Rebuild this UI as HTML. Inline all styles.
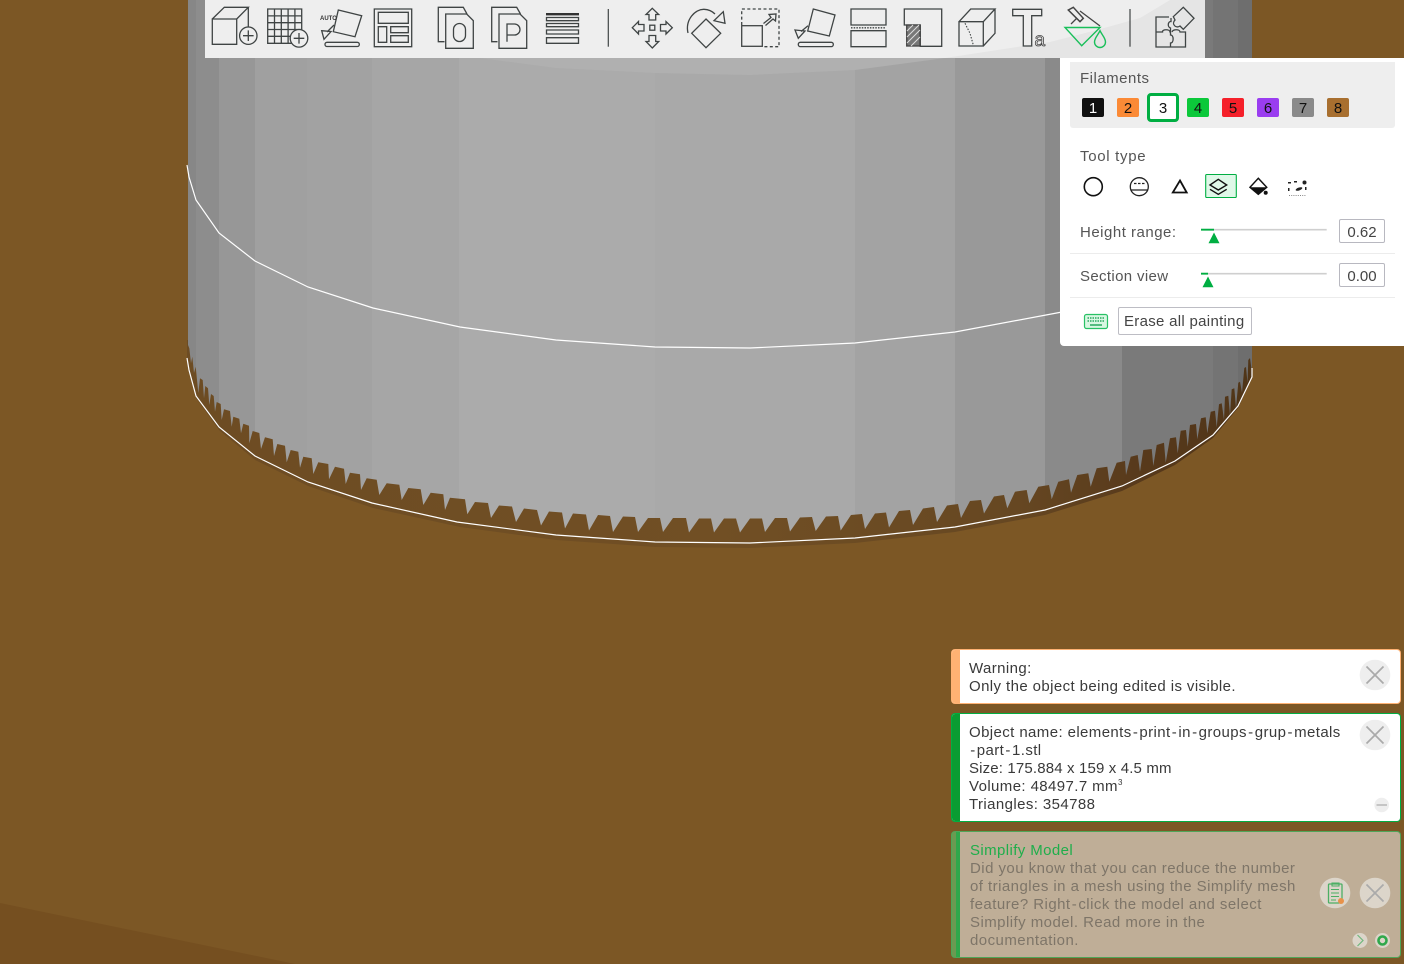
<!DOCTYPE html>
<html lang="en"><head><meta charset="utf-8"><title>Paint</title>
<style>
html,body{margin:0;padding:0}
body{width:1404px;height:964px;overflow:hidden;background:#7c5725;position:relative;font-family:"Liberation Sans",sans-serif;font-size:15px;color:#555}
svg{position:absolute;left:0;top:0}
.t{position:absolute;white-space:nowrap;line-height:18px;letter-spacing:.4px}
.h{padding:0 1.2px}
.sw{position:absolute;top:98px;width:22px;height:19px;border-radius:2px;text-align:center;line-height:22px;color:#111;font-size:15px}
.inp{position:absolute;left:1339px;width:44px;height:22px;border:1px solid #b8b8c0;border-radius:2px;text-align:center;line-height:25px;background:#fff;color:#444;font-size:15px}
.n{position:absolute;left:951px;width:448px;border:1px solid #00ae42;border-radius:4px;background:#fff;color:#3a3a3a;overflow:hidden;box-sizing:content-box}
.bar{position:absolute;left:0;top:0;bottom:0;width:8px}
</style></head><body>
<svg width="1404" height="964" viewBox="0 0 1404 964">
<defs>
<linearGradient id="dk" gradientUnits="userSpaceOnUse" x1="188" y1="0" x2="1252" y2="0">
<stop offset="0" stop-color="#6d4c23"/><stop offset=".5" stop-color="#714f24"/><stop offset=".78" stop-color="#664722"/><stop offset=".9" stop-color="#57391b"/><stop offset="1" stop-color="#503518"/>
</linearGradient>
<clipPath id="cyl"><path d="M188,0V345L189.3,348.3 191,363.3 192.3,356.7 194,373 195.7,366.7 198.3,393 200,378.3 202.7,380 204,398.3 205.3,386 208,388.3 209.3,405 211,394 213.7,396 215,411.7 216.7,402 220.7,404 221.7,420 224,409.3 230,411 231.7,426.7 233.3,416.7 239.3,418.7 241,433.3 243.3,423.7 249,425.7 249.3,443.3 252.7,431 259.3,433 261,449 265,437.3 272.7,439.3 274,456 277.3,444 285,445.7 286.7,462.3 290.7,450 298.3,451.7 300,467.7 303.3,456.7 311.7,458.3 313.3,474 318.3,462.3 328.3,464 329,479.3 335,466.7 344,468.7 345.7,484 350,472.7 360,474.3 361,490 366.7,478.3 376.7,479.7 379.3,495 386.7,483.3 399.3,484.7 401.7,500 408.3,488 420.7,489.3 423.3,505 430.7,492.7 443.3,494.3 445,510 450,497.7 465,499.3 467.3,514.3 475,502 488,503 491,518 499,505.5 512,506.5 516,522 524,508.5 537,510 541,525.5 549,511.5 562,512.5 565,528.5 573,513.5 586,514.5 589,530.5 598,515 610,516 613,532 623,516.5 635,517 638,532 648,518 660,518 663,532 673,518 686,518 689,532.5 699,518.5 711,518.5 714,532.5 724,518.5 736,518.5 740,532.5 750,518.5 762,518.5 765,532 775,518 787,518 790,531.5 800,517.5 812,517 815.7,531 826,516.5 838,516 840.7,530.5 851,515 862,514 865,529 875,513.5 886,512.5 889,527.5 899,511 910,510 913,525 923,508.5 934,507 937,522 947,505.5 958,504 961,518 970,501 981,500 984,513.5 994,496.5 1004,495 1007.3,508.3 1015,491.7 1026.7,490 1029.3,503.3 1038.3,486.7 1049,485 1051.7,499.3 1058.3,481.7 1069,479.3 1071,492.7 1077.3,475 1088.3,473.3 1090.7,486.7 1096.7,468.3 1107.3,466.7 1109.3,481.7 1116.7,462.7 1125,461 1126,475 1130.7,456.7 1137.7,455 1140,471.7 1143.3,450 1151.7,449 1153.3,466 1156.7,445 1164,442.7 1165.7,462.7 1170,438.3 1176,437.3 1177.7,453.3 1180.7,430.7 1186,430 1187.7,446.7 1190,425 1196,424 1197.3,439.3 1201,418.3 1205.7,417.3 1207.3,433.3 1210.7,411.7 1215,410.7 1216.7,427.3 1219,404.3 1221.7,403.3 1224,420 1225,396.7 1228.3,395.7 1230,415 1231.7,389.3 1234.3,388.3 1236,408 1238.3,382.7 1240,381.7 1242,393 1244.3,368 1246,367 1247.5,383 1248.3,360 1250,358 1252,373V0Z"/></clipPath>
</defs>
<polygon points="0,903 295,964 0,964" fill="#754f20"/>
<polygon fill="url(#dk)" points="187,340 187,360 189,372 196,398 219,430 255,460 308,486 373,508 460,527 556,540 655,547 750,548 855,543 955,532 1045,515 1122,491 1175,465 1213,438 1238,408 1252,378 1252,340"/>
<g clip-path="url(#cyl)">
<rect x="188" y="0" width="8" height="560" fill="#878787"/>
<rect x="196" y="0" width="23" height="560" fill="#8d8d8d"/>
<rect x="219" y="0" width="36" height="560" fill="#979797"/>
<rect x="255" y="0" width="52" height="560" fill="#a0a0a0"/>
<rect x="307" y="0" width="65" height="560" fill="#a2a2a2"/>
<rect x="372" y="0" width="87" height="560" fill="#a6a6a6"/>
<rect x="459" y="0" width="196" height="560" fill="#ababab"/>
<rect x="655" y="0" width="200" height="560" fill="#a9a9a9"/>
<rect x="855" y="0" width="100" height="560" fill="#a3a3a3"/>
<rect x="955" y="0" width="90" height="560" fill="#999999"/>
<rect x="1045" y="0" width="77" height="560" fill="#8a8a8a"/>
<rect x="1122" y="0" width="91" height="560" fill="#7a7a7a"/>
<rect x="1213" y="0" width="25" height="560" fill="#747474"/>
<rect x="1238" y="0" width="14" height="560" fill="#6e6e6e"/>
</g>
<polygon points="480,58 556,68 655,73 750,75 855,70 945,58" fill="#b0b0b0"/>
<polyline fill="none" stroke="#fff" stroke-width="1.2" points="187,165 189,177 196,200 219,233 255,261 308,287 373,308 460,327 556,340 655,347 750,348 855,343 955,332 1062,312"/>
<polyline fill="none" stroke="#fff" stroke-width="1.2" points="187,358 189,370 196,396 219,427 255,456 308,482 372,503 457,522 556,535 655,542 750,543 855,538 955,527 1045,510 1122,486 1175,461 1213,435 1238,406 1252,377 1252,368"/>
<!-- toolbar -->
<rect x="205" y="0" width="1000" height="58" fill="#eeeeee"/>
<polygon points="945,58 1050,42 1097,30 1140,18 1170,0 1205,0 1205,58" fill="#e5e5e5"/>
<g fill="none" stroke="#3f4444" stroke-width="1.3">
<!-- cube plus -->
<path d="M212.3,19H236.7V44.3H212.3ZM212.3,19L224.3,7.3H248.3L236.7,19M248.3,7.3V28"/>
<circle cx="248.3" cy="35.7" r="8.7" fill="#eee"/><path d="M243,35.7H253.6M248.3,30.4V41"/>
<!-- grid plus -->
<path d="M267.7,9H301.7V43.3H267.7ZM274.5,9V43.3M281.3,9V43.3M288.1,9V43.3M294.9,9V43.3M267.7,15.9H301.7M267.7,22.7H301.7M267.7,29.5H301.7M267.7,36.3H301.7"/>
<circle cx="299" cy="38.3" r="8.8" fill="#eee"/><path d="M293.7,38.3H304.3M299,33V43.6"/>
<!-- auto orient -->
<path d="M338.3,10L361.7,15.7 355,36.7 333.3,31.7Z"/>
<rect x="325" y="42.3" width="34.3" height="4.2" rx="2"/>
<path d="M321.7,30.7L331,31.5 324,39.3ZM334,25L327,32"/>
<!-- arrange -->
<path d="M374.3,9H411.7V46.7H374.3ZM378.3,12.3H408.3V23.3H378.3ZM378.3,26.7H386.7V42.3H378.3ZM390.7,26.7H408.3V32.7H390.7ZM390.7,35.7H408.3V42.3H390.7Z"/>
<!-- O -->
<path d="M444.5,41.7H438.3V7.3H463.3L467,14"/><path d="M445.7,14H466.7L473.3,20.7V48.3H445.7Z"/>
<rect x="453.5" y="23.5" width="12" height="18" rx="6"/>
<!-- P -->
<path d="M497.5,41.7H491.7V7.3H516.7L520.5,14"/><path d="M499,14H520L526.7,20.7V48.3H499Z"/>
<path d="M507,41.7V24H514.5a5.5,5.5 0 0 1 0,11H507"/>
<!-- layers -->
<rect x="546" y="13" width="33" height="2.4" fill="#333" stroke="none"/>
<path d="M546.5,17.5H578.5V20.7H546.5ZM546.5,23.5H578.5V26.7H546.5ZM546.5,30H578.5V34H546.5ZM546.5,37.7H578.5V43.3H546.5Z"/>
<path d="M608.3,9V46.7" stroke-width="1.2"/>
<!-- move -->
<path d="M652.3,8.3L658.7,14.5H655.7V20H649V14.5H646ZM652.3,48L658.7,41.5H655.7V35.5H649V41.5H646ZM632.3,27.7L638.5,21.5V24.5H644V31H638.5V34ZM672.3,27.7L666,21.5V24.5H660.5V31H666V34Z"/>
<rect x="649.8" y="25.2" width="5" height="5"/>
<!-- rotate -->
<path d="M706,19L720.7,33.3 706,47.7 691.7,33.3Z"/>
<path d="M688,33C685,20 695,9 704,9.3C708,9.5 712,11 715,14"/>
<path d="M723.3,11.7L725,23.3 714,20.7Z"/>
<!-- scale -->
<path d="M741.7,25V9H779V46.7H762.3" stroke-dasharray="3 2.4"/>
<rect x="741.7" y="25.7" width="20.6" height="20.6"/>
<path d="M763.5,23.5L771,17.5 769,14.5 776,14 775.5,21 773,19 765.5,25.5"/>
<!-- flatten -->
<path d="M813.3,9L835,15 829.3,36 807.7,31Z"/>
<rect x="798.3" y="42.3" width="35" height="4.3" rx="2"/>
<path d="M795,30L805,31 798.3,38.3ZM808,25.7L801,31.5"/>
<!-- cut -->
<path d="M851,9H886V25H851ZM851,30.7H886V46.7H851Z"/>
<path d="M851,27.8H886" stroke-dasharray="1.5 1.2"/>
<!-- L support -->
<path d="M904.3,9H941.7V46.3H920.3V25H904.3Z"/>
<rect x="906.7" y="25" width="13.3" height="21" fill="#777" stroke="#444"/>
<path d="M907,31L913,25M907,37L919,25M907,43L920,30M911,46L920,37" stroke="#ddd" stroke-width="1"/>
<!-- seam cube -->
<path d="M959,21.7H983.3V46H959ZM959,21.7L970.7,9H995L983.3,21.7M995,9V33.3L983.3,46"/>
<path d="M965,23.3L970,33.3 973.3,45" stroke-dasharray="1.5 1.5" stroke-width="1.1"/>
<!-- text -->
<path d="M1012.7,9.3H1041.7V15.7H1031.7V46H1023.3V15.7H1012.7Z"/>
<!-- paint handle -->
<path d="M1068.3,10L1073.3,7.3 1083.3,18.3 1080,21.7Z" stroke="#444" stroke-width="1.5"/>
<path d="M1080,11L1100,26M1071,24L1077,18" stroke="#444"/>
<path d="M1130,9V46.7" stroke-width="1.2"/>
<!-- puzzle -->
<path d="M1169,17H1156V32H1162.5C1162,29 1170,29 1170,32H1170.5V28C1167,27 1168,21 1171,21.5V18M1156,32V47H1170.5V43C1174,43 1174,35 1170.5,35V32M1170.5,47H1185.5V32H1180C1180,29 1173,29 1172,32"/>
<path d="M1173.3,16.7L1183.3,7.3 1194,18.3 1183.3,29.3 1180,26C1176,29 1171,24 1175,20Z"/>
</g>
<text x="1034.5" y="46" font-family="Liberation Sans" font-size="19" fill="none" stroke="#444" stroke-width=".8">a</text>
<text x="320" y="20" font-family="Liberation Sans" font-size="6" font-weight="bold" fill="#333">AUTO</text>
<g fill="none" stroke="#19bf5a" stroke-width="1.4">
<path d="M1065,27.5H1100L1081.7,45.7Z"/>
<path d="M1100,30.7C1098,35 1094.5,38 1094.5,42A5.5,5.5 0 0 0 1105.5,42C1105.5,38 1102,35 1100,30.7Z"/>
</g>
</svg>

<!-- panel -->
<div style="position:absolute;left:1060px;top:58px;width:344px;height:288px;background:#fff;border-radius:0 0 0 4px"></div>
<div style="position:absolute;left:1070px;top:62px;width:325px;height:66px;background:#eeeeee;border-radius:0 0 3px 3px"></div>
<div class="t" style="left:1080px;top:70px;color:#555;letter-spacing:.5px">Filaments</div>
<div class="sw" style="left:1082px;background:#111;color:#fff">1</div>
<div class="sw" style="left:1117px;background:#fb8a36">2</div>
<div style="position:absolute;left:1147px;top:93px;width:26px;height:23px;border:3px solid #00ae42;border-radius:4px;background:#fff;text-align:center;line-height:26px;color:#111">3</div>
<div class="sw" style="left:1187px;background:#0bc83a">4</div>
<div class="sw" style="left:1222px;background:#f5202a">5</div>
<div class="sw" style="left:1257px;background:#9a3df0">6</div>
<div class="sw" style="left:1292px;background:#8a8a8a">7</div>
<div class="sw" style="left:1327px;background:#a86f2f">8</div>
<div class="t" style="left:1080px;top:148px;letter-spacing:.7px">Tool type</div>
<div class="t" style="left:1080px;top:224px;letter-spacing:.5px">Height range:</div>
<div class="t" style="left:1080px;top:268px;letter-spacing:.35px">Section view</div>
<div class="inp" style="top:219px">0.62</div>
<div class="inp" style="top:263px">0.00</div>
<div style="position:absolute;left:1118px;top:307px;width:132px;height:26px;border:1px solid #bdbdc4;border-radius:2px;background:#fff;line-height:28px;text-indent:5px;color:#444;letter-spacing:.3px;white-space:nowrap">Erase all painting</div>
<svg width="1404" height="964" viewBox="0 0 1404 964">
<path d="M1070,253.5H1395M1070,297.5H1395" stroke="#ececec"/>
<circle cx="1093.3" cy="186.7" r="9" fill="none" stroke="#111" stroke-width="1.6"/>
<circle cx="1139.3" cy="186.7" r="9" fill="none" stroke="#222" stroke-width="1.3"/>
<path d="M1130.5,190H1148" stroke="#222" stroke-width="1.2"/><path d="M1134,183.5H1145" stroke="#222" stroke-width="1.2" stroke-dasharray="2.5 1.5"/>
<path d="M1180,180.5L1186.7,192.5H1172.8Z" fill="none" stroke="#111" stroke-width="1.8"/>
<rect x="1205.7" y="174.5" width="30.6" height="23" rx="1" fill="#dff8e8" stroke="#00ae42" stroke-width="1.1"/>
<path d="M1210,185L1218.3,179.3 1226.7,185 1218.3,190ZM1210,189.3L1218.3,194.3 1226.7,189.3" fill="none" stroke="#111" stroke-width="1.4"/>
<path d="M1258.3,178.3L1266.7,187.3 1258.3,194.3 1250,187.3Z" fill="#fff" stroke="#111" stroke-width="1.5"/>
<path d="M1250,187.3H1266.7L1258.3,194.3Z" fill="#111"/><circle cx="1265.7" cy="192.7" r="2" fill="#111"/>
<g fill="#222"><rect x="1288" y="182" width="3" height="1.5"/><rect x="1294" y="181" width="3" height="1.5"/><circle cx="1304.5" cy="182.5" r="2"/><rect x="1288" y="188" width="1.5" height="3"/><ellipse cx="1299" cy="189" rx="3.5" ry="1.4" transform="rotate(-20 1299 189)"/><rect x="1305" y="187" width="1.5" height="3"/></g>
<path d="M1289,195.5H1306" stroke="#888" stroke-dasharray="1 1.2"/>
<path d="M1201,229.7H1326.7M1201,273.7H1326.7" stroke="#cfcfcf" stroke-width="1.6"/>
<path d="M1201,229.7H1214M1201,273.7H1208" stroke="#00ae42" stroke-width="1.8"/>
<path d="M1214,232.5L1219.5,243.3H1208.5ZM1208,276.5L1213.5,287.3H1202.5Z" fill="#00ae42"/>
<rect x="1084.5" y="314.5" width="23" height="14" rx="2" fill="#d8f7e2" stroke="#28c165" stroke-width="1.2"/>
<path d="M1087.5,318H1104.5M1087.5,321H1104.5" stroke="#28a860" stroke-width="1.6" stroke-dasharray="1.5 1"/><path d="M1090,325H1102" stroke="#28a860" stroke-width="1.5"/>
</svg>

<!-- notifications -->
<div class="n" style="top:649px;height:53px;border-color:#ffb273"><div class="bar" style="background:#ffb273"></div></div>
<div class="t" style="left:969px;top:660px;color:#3a3a3a">Warning:<br>Only the object being edited is visible.</div>
<div class="n" style="top:713px;height:107px;border-color:#00ae42"><div class="bar" style="background:#0a9c32"></div></div>
<div class="t" style="left:969px;top:724px;color:#3a3a3a">Object name: elements<span class="h">-</span>print<span class="h">-</span>in<span class="h">-</span>groups<span class="h">-</span>grup<span class="h">-</span>metals<br><span class="h">-</span>part<span class="h">-</span>1.stl<br><span style="letter-spacing:.15px">Size: 175.884 x 159 x 4.5 mm</span><br>Volume: 48497.7 mm<sup style="font-size:8px;line-height:0;vertical-align:6px">3</sup><br>Triangles: 354788</div>
<div class="n" style="top:831px;height:125px;border-color:#4fa558;background:#bfae97"><div class="bar" style="background:#2fa84b"></div><div style="position:absolute;left:0;top:0;bottom:0;width:4px;background:#6b9a52"></div></div>
<div class="t" style="left:970px;top:842px;color:#1fae4b">Simplify Model</div>
<div class="t" style="left:970px;top:860px;color:#7e7568;letter-spacing:.45px">Did you know that you can reduce the number<br>of triangles in a mesh using the Simplify mesh<br>feature? Right<span class="h">-</span>click the model and select<br>Simplify model. Read more in the<br>documentation.</div>
<svg width="1404" height="964" viewBox="0 0 1404 964">
<circle cx="1375" cy="675" r="15.3" fill="#eeeeee"/><path d="M1366.5,666.5L1383.5,683.5M1383.5,666.5L1366.5,683.5" stroke="#aaa" stroke-width="1.7"/>
<circle cx="1375" cy="735" r="15.3" fill="#eeeeee"/><path d="M1366.5,726.5L1383.5,743.5M1383.5,726.5L1366.5,743.5" stroke="#aaa" stroke-width="1.7"/>
<circle cx="1381.7" cy="805" r="7.3" fill="#eeeeee"/><path d="M1376.5,805H1387" stroke="#aaa" stroke-width="1.2"/>
<circle cx="1375" cy="893" r="15.3" fill="#dcd5ca"/><path d="M1366.5,884.5L1383.5,901.5M1383.5,884.5L1366.5,901.5" stroke="#aaa" stroke-width="1.7"/>
<circle cx="1335" cy="893" r="15.3" fill="#dcd5ca"/>
<rect x="1328.5" y="884" width="13.5" height="19" rx="1" fill="none" stroke="#4caf64" stroke-width="1.3"/>
<path d="M1332,883H1339V886H1332ZM1331,889.5H1339M1331,893H1339M1331,896.5H1339M1331,900H1336" fill="none" stroke="#4caf64" stroke-width="1.1"/>
<circle cx="1341" cy="901" r="3" fill="#e8924a"/>
<circle cx="1360" cy="940.5" r="7.5" fill="#dcd5ca"/><path d="M1357.5,935L1363,940.5 1357.5,946" fill="none" stroke="#6fb87c" stroke-width="1.2"/>
<circle cx="1382.5" cy="940.5" r="7.5" fill="#dcd5ca"/><circle cx="1382.5" cy="940.5" r="4" fill="none" stroke="#2fa84b" stroke-width="2.6"/>
</svg>
</body></html>
